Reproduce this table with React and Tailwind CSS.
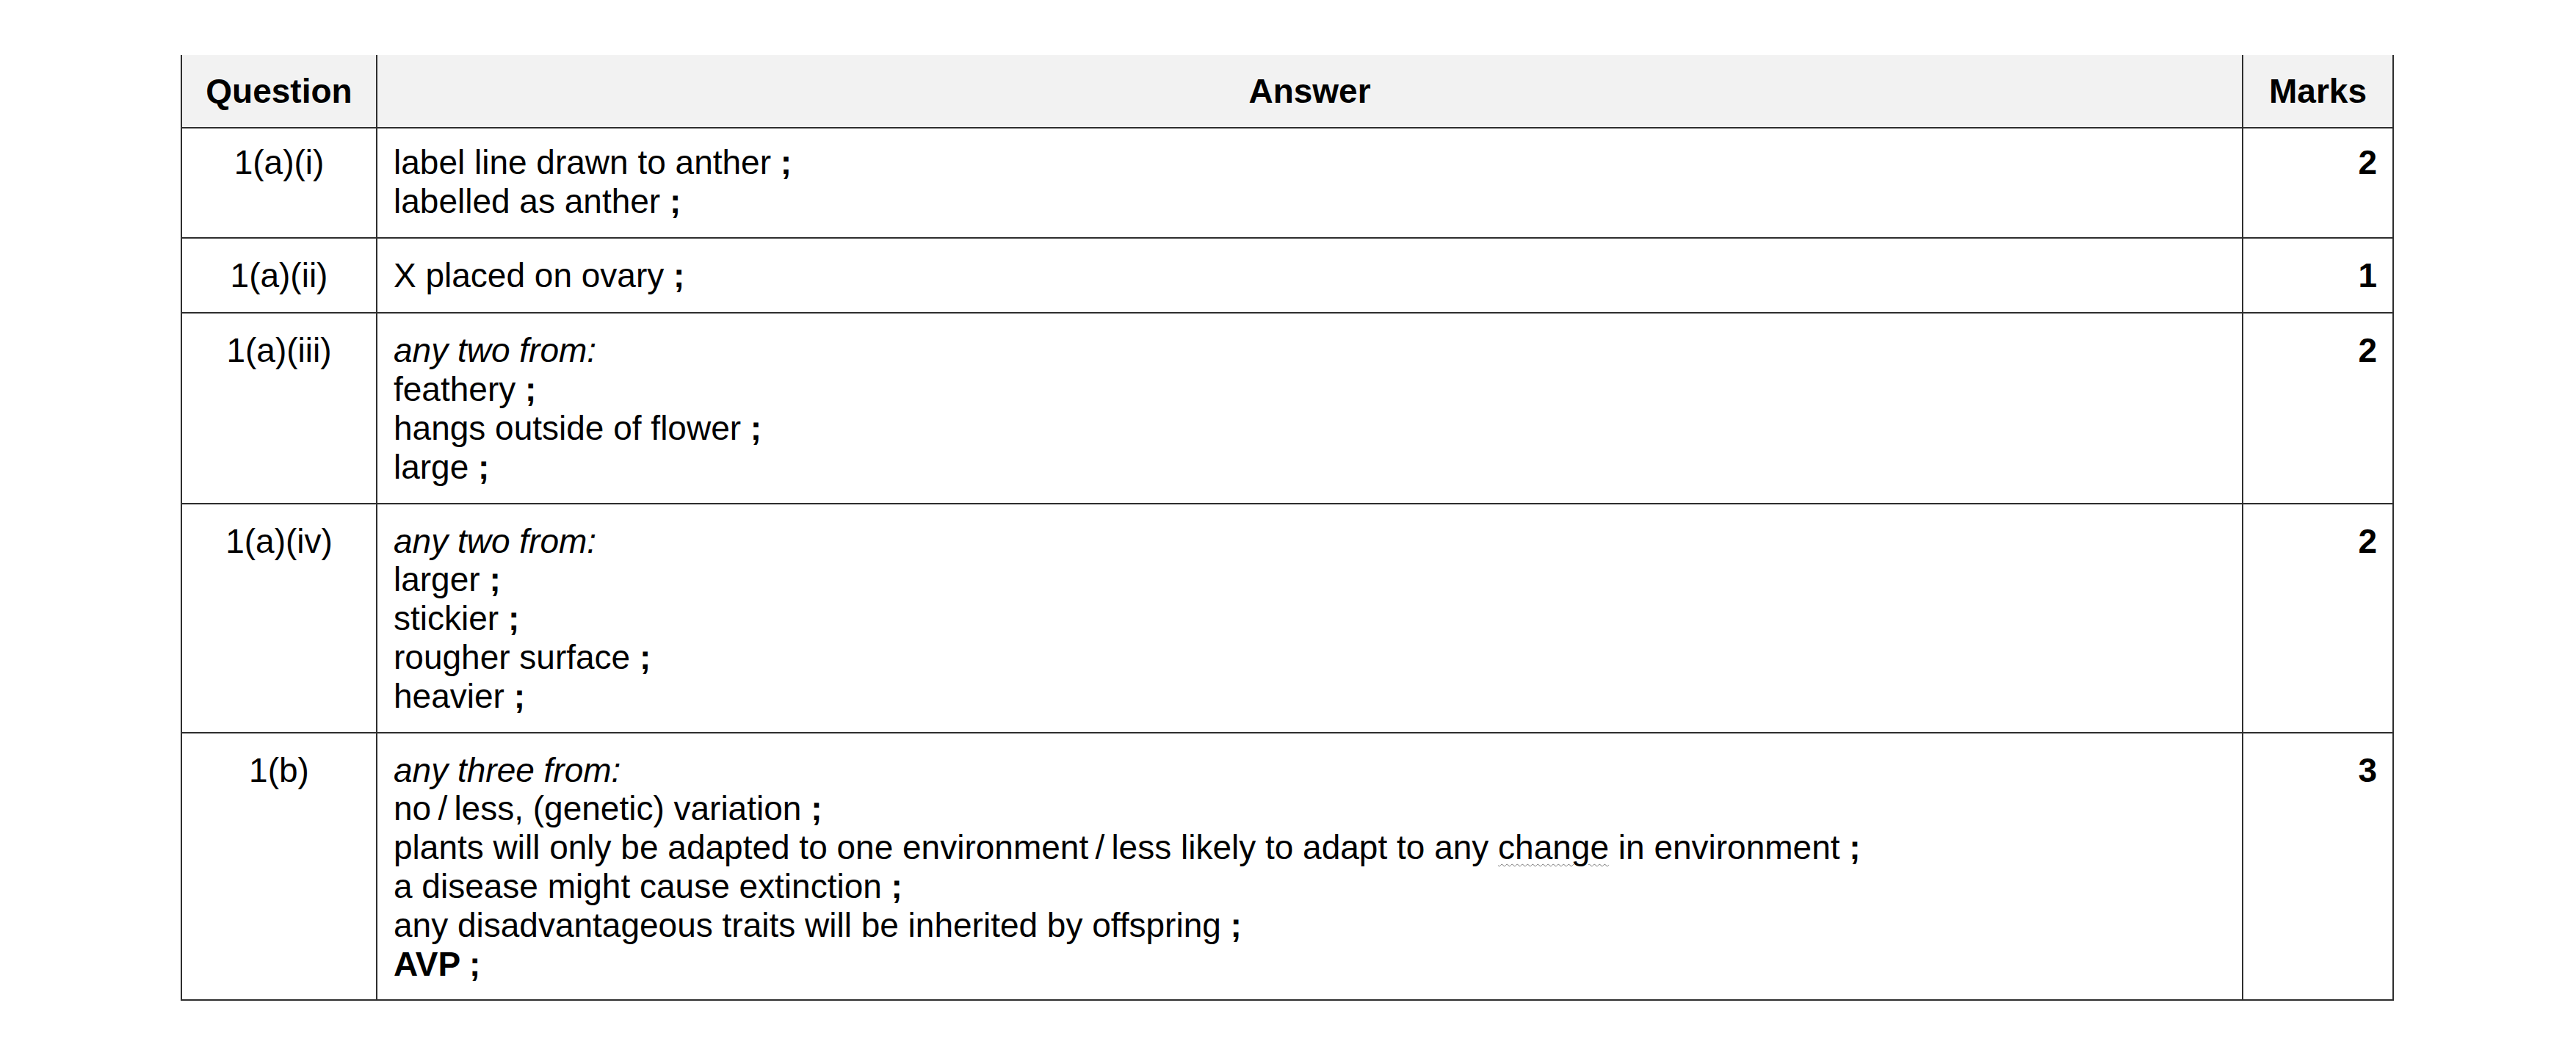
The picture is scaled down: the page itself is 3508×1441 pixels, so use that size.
import React from "react";

const Semi = () => <b className="font-bold">;</b>;

const Line = ({ children, italic }) => (
  <div className={italic ? "italic" : ""}>{children}</div>
);

const rows = [
  {
    q: "1(a)(i)",
    marks: "2",
    pad: "pt-[20px] pb-[22px]",
    lines: [
      <Line key="a">label line drawn to anther <Semi /></Line>,
      <Line key="b">labelled as anther <Semi /></Line>,
    ],
  },
  {
    q: "1(a)(ii)",
    marks: "1",
    pad: "pt-[24px] pb-[24px]",
    lines: [<Line key="a">X placed on ovary <Semi /></Line>],
  },
  {
    q: "1(a)(iii)",
    marks: "2",
    pad: "pt-[24px] pb-[22px]",
    lines: [
      <Line key="a" italic>any two from:</Line>,
      <Line key="b">feathery <Semi /></Line>,
      <Line key="c">hangs outside of flower <Semi /></Line>,
      <Line key="d">large <Semi /></Line>,
    ],
  },
  {
    q: "1(a)(iv)",
    marks: "2",
    pad: "pt-[24px] pb-[22px]",
    lines: [
      <Line key="a" italic>any two from:</Line>,
      <Line key="b">larger <Semi /></Line>,
      <Line key="c">stickier <Semi /></Line>,
      <Line key="d">rougher surface <Semi /></Line>,
      <Line key="e">heavier <Semi /></Line>,
    ],
  },
  {
    q: "1(b)",
    marks: "3",
    pad: "pt-[24px] pb-[22px]",
    lines: [
      <Line key="a" italic>any three from:</Line>,
      <Line key="b">no{"\u2009/\u2009"}less, (genetic) variation <Semi /></Line>,
      <Line key="c">
        plants will only be adapted to one environment{"\u2009/\u2009"}less likely to adapt to any{" "}
        <span className="underline decoration-wavy decoration-[#777] decoration-1 underline-offset-[6px]">change</span>{" "}
        in environment <Semi />
      </Line>,
      <Line key="d">a disease might cause extinction <Semi /></Line>,
      <Line key="e">any disadvantageous traits will be inherited by offspring <Semi /></Line>,
      <Line key="f"><b className="font-bold">AVP ;</b></Line>,
    ],
  },
];

export default function App() {
  return (
    <div className="min-h-[1441px] w-full bg-white pt-[75px] font-['Liberation_Sans',Arial,sans-serif] text-[46px] leading-[52.8px] text-black">
      <div className="ml-[246px] w-[3014px]">
        {/* header */}
        <div className="flex h-[100px] border-x-2 border-b-2 border-[#2e2e2e] bg-[#f2f2f2] font-bold">
          <div className="flex w-[266px] items-center justify-center border-r-2 border-[#2e2e2e]">Question</div>
          <div className="flex flex-1 items-center justify-center border-r-2 border-[#2e2e2e]">Answer</div>
          <div className="flex w-[203px] items-center justify-center">Marks</div>
        </div>
        {rows.map((r) => (
          <div key={r.q} className="flex border-x-2 border-b-2 border-[#2e2e2e]">
            <div className={`w-[266px] border-r-2 border-[#2e2e2e] text-center ${r.pad}`}>{r.q}</div>
            <div className={`flex-1 border-r-2 border-[#2e2e2e] pl-[22px] ${r.pad}`}>{r.lines}</div>
            <div className={`w-[203px] pr-[21px] text-right font-bold ${r.pad}`}>{r.marks}</div>
          </div>
        ))}
      </div>
    </div>
  );
}
